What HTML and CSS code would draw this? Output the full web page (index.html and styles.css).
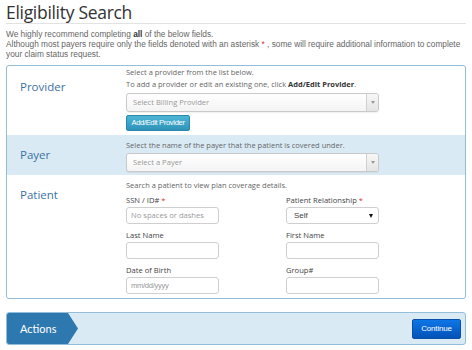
FILE: index.html
```html
<!DOCTYPE html>
<html>
<head>
<meta charset="utf-8">
<link rel="stylesheet" href="styles.css">
</head>
<body>
<div class="page">
  <h1 class="title">Eligibility Search</h1>
  <p class="intro">We highly recommend completing <b>all</b> of the below fields.<br>Although most payers require only the fields denoted with an asterisk <span class="req">*</span> , some will require additional information to complete your claim status request.</p>

  <div class="formbox">
    <div class="section provider">
      <div class="sec-label">Provider</div>
      <div class="sec-body">
        <div class="desc">Select a provider from the list below.</div>
        <div class="desc">To add a provider or edit an existing one, click <b>Add/Edit Provider</b>.</div>
        <div class="combo"><span class="combo-text">Select Billing Provider</span><span class="combo-arrow"><span class="tri"></span></span></div>
        <div class="btn-teal">Add/Edit Provider</div>
      </div>
    </div>
    <div class="section payer">
      <div class="sec-label">Payer</div>
      <div class="sec-body">
        <div class="desc">Select the name of the payer that the patient is covered under.</div>
        <div class="combo"><span class="combo-text">Select a Payer</span><span class="combo-arrow"><span class="tri"></span></span></div>
      </div>
    </div>
    <div class="section patient">
      <div class="sec-label">Patient</div>
      <div class="sec-body">
        <div class="desc">Search a patient to view plan coverage details.</div>
        <div class="fields">
          <div class="field">
            <div class="flabel">SSN / ID# <span class="req">*</span></div>
            <div class="input ph">No spaces or dashes</div>
          </div>
          <div class="field">
            <div class="flabel">Patient Relationship <span class="req">*</span></div>
            <div class="input sel"><span>Self</span><span class="btri"></span></div>
          </div>
          <div class="field">
            <div class="flabel">Last Name</div>
            <div class="input"></div>
          </div>
          <div class="field">
            <div class="flabel">First Name</div>
            <div class="input"></div>
          </div>
          <div class="field">
            <div class="flabel">Date of Birth</div>
            <div class="input ph date">mm/dd/yyyy</div>
          </div>
          <div class="field">
            <div class="flabel">Group#</div>
            <div class="input"></div>
          </div>
        </div>
      </div>
    </div>
  </div>

  <div class="actions">
    <div class="actions-tab">Actions</div>
    <div class="btn-blue">Continue</div>
  </div>
</div>
</body>
</html>
```

FILE: styles.css
```css
* { box-sizing: border-box; }
html, body { margin: 0; padding: 0; background: #fff; }
.page { padding: 0 6px 0 6px; width: 472px; }
.title {
  margin: 0;
  font-family: "Open Sans", sans-serif;
  font-weight: 400;
  font-size: 17.5px;
  letter-spacing: -0.3px;
  line-height: 24px;
  color: #333;
  border-bottom: 1px solid #e2e2e2;
  height: 24px;
}
.intro {
  margin: 5px 0 0 0;
  font-family: "Liberation Sans", Arial, sans-serif;
  font-size: 8.3px;
  line-height: 10px;
  color: #666;
}
.intro b { color: #333; }
.req { color: #d33; }
.formbox {
  margin-top: 6px;
  border: 1px solid #94bdda;
  border-radius: 3px;
  overflow: hidden;
}
.section { display: flex; }
.sec-label {
  width: 119px;
  flex: none;
  padding: 13px 0 0 13px;
  font-family: "Open Sans", sans-serif;
  font-size: 11.5px;
  line-height: 16px;
  color: #3b72a6;
}
.sec-body { flex: 1; }
.provider .sec-body { padding: 0 0 4px 0; }
.payer { background: #d9eaf5; }
.payer .sec-body { padding: 4px 0 3px 0; }
.payer .sec-label { padding-top: 12px; }
.patient .sec-label { padding-top: 12px; }
.patient .sec-body { padding: 4px 0 4px 0; }
.desc {
  font-family: "Open Sans", sans-serif;
  font-size: 7.5px;
  line-height: 12px;
  color: #666;
}
.desc b { color: #333; }
.combo {
  margin-top: 3px;
  width: 253px;
  height: 19px;
  display: flex;
  border: 1px solid #c9c9c9;
  border-radius: 3px;
  background: linear-gradient(#fff, #f4f4f4);
  box-shadow: 0 1px 1px rgba(0,0,0,0.06);
}
.payer .combo { margin-top: 2px; }
.combo-text {
  flex: 1;
  padding-left: 6px;
  font-family: "Open Sans", sans-serif;
  font-size: 7.6px;
  line-height: 17px;
  color: #999;
}
.combo-arrow {
  width: 12px;
  border-left: 1px solid #d0d0d0;
  background: linear-gradient(#f7f7f7, #e4e4e4);
  display: flex;
  align-items: center;
  justify-content: center;
  border-radius: 0 3px 3px 0;
}
.tri {
  width: 0; height: 0;
  border-left: 2px solid transparent;
  border-right: 2px solid transparent;
  border-top: 3px solid #999;
}
.btn-teal {
  margin-top: 3px;
  width: 64px;
  height: 16px;
  border-radius: 2px;
  background: linear-gradient(#4cb6d6, #2f93b8);
  border: 1px solid #2a88ac;
  color: #fff;
  font-family: "Liberation Sans", Arial, sans-serif;
  font-size: 7.6px;
  letter-spacing: -0.35px;
  line-height: 14px;
  text-align: center;
}
.fields {
  display: grid;
  grid-template-columns: 93px 93px;
  column-gap: 67px;
  row-gap: 6px;
  margin-top: 4px;
}
.flabel {
  font-family: "Open Sans", sans-serif;
  font-size: 7.6px;
  line-height: 11px;
  color: #444;
  margin-bottom: 1px;
}
.input {
  height: 17px;
  border: 1px solid #cfcfcf;
  border-radius: 3px;
  background: #fff;
  font-family: "Open Sans", sans-serif;
  font-size: 7.6px;
  line-height: 15px;
  padding-left: 4px;
}
.ph { color: #999; }
.date { font-family: "Liberation Sans", Arial, sans-serif; letter-spacing: -0.3px; }
.sel {
  display: flex;
  justify-content: space-between;
  align-items: center;
  padding: 0 5px 0 7px;
  color: #444;
  font-family: "Liberation Sans", Arial, sans-serif;
  font-size: 8px;
}
.btri {
  width: 0; height: 0;
  border-left: 2.5px solid transparent;
  border-right: 2.5px solid transparent;
  border-top: 4px solid #111;
}
.actions {
  margin-top: 13px;
  height: 33px;
  border: 1px solid #94bdda;
  border-radius: 3px;
  background: #d9eaf5;
  display: flex;
  align-items: center;
  justify-content: space-between;
  overflow: hidden;
}
.actions-tab {
  align-self: stretch;
  width: 71px;
  background: #2e78b0;
  clip-path: polygon(0 0, 61px 0, 71px 50%, 61px 100%, 0 100%);
  color: #fff;
  font-family: Lato, sans-serif;
  font-size: 11px;
  line-height: 31px;
  padding-left: 13px;
}
.btn-blue {
  margin-right: 4px;
  width: 49px;
  height: 20px;
  border-radius: 2px;
  background: linear-gradient(#0f76e6, #0352b8);
  border: 1px solid #0a4fa6;
  color: #fff;
  font-family: "Liberation Sans", Arial, sans-serif;
  font-size: 8px;
  letter-spacing: -0.2px;
  line-height: 18px;
  text-align: center;
}
```
